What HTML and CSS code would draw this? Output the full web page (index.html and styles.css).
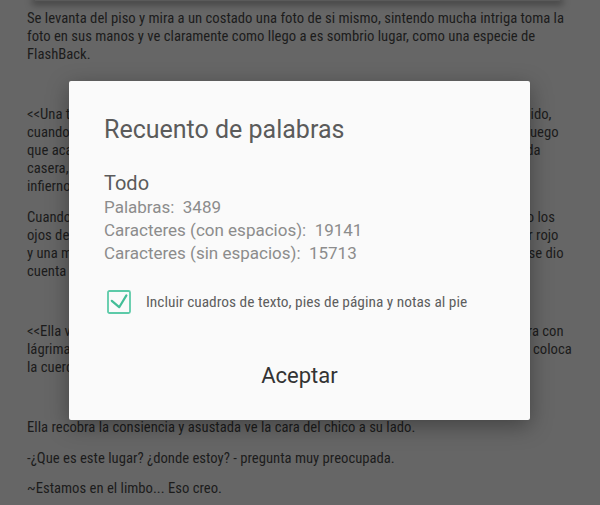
FILE: index.html
```html
<!DOCTYPE html>
<html lang="es">
<head>
    <meta charset="UTF-8">
    <meta name="viewport" content="width=device-width, initial-scale=1.0">
    <title>Recuento de palabras</title>
    <link rel="stylesheet" href="styles.css">
</head>
<body>
    <div class="toolbar"></div>

    <div class="document">
        <p>Se levanta del piso y mira a un costado una foto de si mismo, sintendo mucha intriga toma la<br>foto en sus manos y ve claramente como llego a es sombrio lugar, como una especie de<br>FlashBack.</p>
        <p class="blank"></p>
        <p>&lt;&lt;Una tarde cualquiera en el pueblo, nada parecía fuera de lo normal, nada había sucedido,<br>cuando de repente se escucharon gritos desde la colina, y todos vieron allí un enorme fuego<br>que acababa con todo a su paso, las familias huían cargando sus cosas y su rica comida<br>casera, mientras sus niños lloraban, sin entender lo que pasaba, y aquello ya parecía el<br>infierno mismo.</p>
        <p>Cuando el humo se disipó un poco, el chico se quedó inmóvil en el sendero, observando los<br>ojos de la gente que lo rodeaba, todo a su alrededor se había teñido de un intenso color rojo<br>y una mujer lo miraba desde la ventana de la vieja casa, y fue en ese momento cuando se dio<br>cuenta de que algo no andaba bien.</p>
        <p class="blank"></p>
        <p>&lt;&lt;Ella ve al chico tirado en el suelo, se acerca lentamente, se arrodilla a su lado y lo mira con<br>lágrimas en sus ojos, sin saber bien qué hacer le toma su mano y la aprieta muy fuerte; coloca<br>la cuerda en su mochila y lo arrastra hasta la orilla del río.&gt;&gt;</p>
        <p class="blank"></p>
        <p>Ella recobra la consiencia y asustada ve la cara del chico a su lado.</p>
        <p>-¿Que es este lugar? ¿donde estoy? - pregunta muy preocupada.</p>
        <p>~Estamos en el limbo... Eso creo.</p>
    </div>

    <div class="dialog">
        <h1>Recuento de palabras</h1>
        <div class="stats">
            <h2>Todo</h2>
            <div class="stat">Palabras:&nbsp; 3489</div>
            <div class="stat">Caracteres (con espacios):&nbsp; 19141</div>
            <div class="stat">Caracteres (sin espacios):&nbsp; 15713</div>
        </div>
        <label class="option">
            <span class="checkbox">
                <svg width="24" height="24" viewBox="0 0 24 24">
                    <rect x="1" y="1" width="22" height="22" rx="1.5" fill="none" stroke="#5ccaa8" stroke-width="1.8"/>
                    <path d="M4.8 10.8 L12.2 17.2 L19.4 5.4" fill="none" stroke="#43bd97" stroke-width="2.2" stroke-linecap="round" stroke-linejoin="round"/>
                </svg>
            </span>
            Incluir cuadros de texto, pies de página y notas al pie
        </label>
        <button class="accept-btn">Aceptar</button>
    </div>
</body>
</html>
```
FILE: styles.css
```css
body {
    margin: 0;
    background-color: #666666;
    font-family: "Roboto Condensed", Roboto, sans-serif;
    overflow: hidden;
}
.toolbar {
    height: 1px;
    margin: 0 40px 0 35px;
    background-color: #5a5a5a;
    box-shadow: 0 1px 7px 3px rgba(0, 0, 0, 0.35);
}
.document {
    padding: 8px 20px 0 27px;
    color: #1c1c1c;
    font-size: 14.7px;
    line-height: 18px;
}
.document p {
    margin: 0 0 12.2px;
    white-space: nowrap;
}
.document p.blank {
    height: 18px;
}
.dialog {
    position: absolute;
    left: 69px;
    top: 81px;
    width: 461px;
    height: 339px;
    box-sizing: border-box;
    padding: 34px 35px 0 35px;
    background-color: #fafafa;
    border-radius: 2px;
    box-shadow: 0 6px 22px rgba(0, 0, 0, 0.35);
    font-family: Roboto, sans-serif;
    display: flex;
    flex-direction: column;
}
.dialog h1 {
    margin: 0;
    font-size: 25px;
    font-weight: normal;
    line-height: 30px;
    color: #5b5b5b;
}
.stats {
    margin-top: 25px;
}
.stats h2 {
    margin: 0;
    font-size: 20px;
    font-weight: normal;
    line-height: 26px;
    color: #5b5b5b;
}
.stat {
    font-size: 17px;
    line-height: 23px;
    color: #8c8c8c;
}
.option {
    display: flex;
    align-items: center;
    gap: 15px;
    margin-top: 25px;
    padding-left: 3px;
    font-family: "Roboto Condensed", Roboto, sans-serif;
    font-size: 15.4px;
    color: #5e5e5e;
}
.checkbox {
    display: flex;
    width: 24px;
    height: 24px;
}
.accept-btn {
    margin: 17px -35px 0;
    height: 88px;
    border: none;
    background: none;
    font-family: Roboto, sans-serif;
    font-size: 22px;
    color: #333333;
    cursor: pointer;
}
```
